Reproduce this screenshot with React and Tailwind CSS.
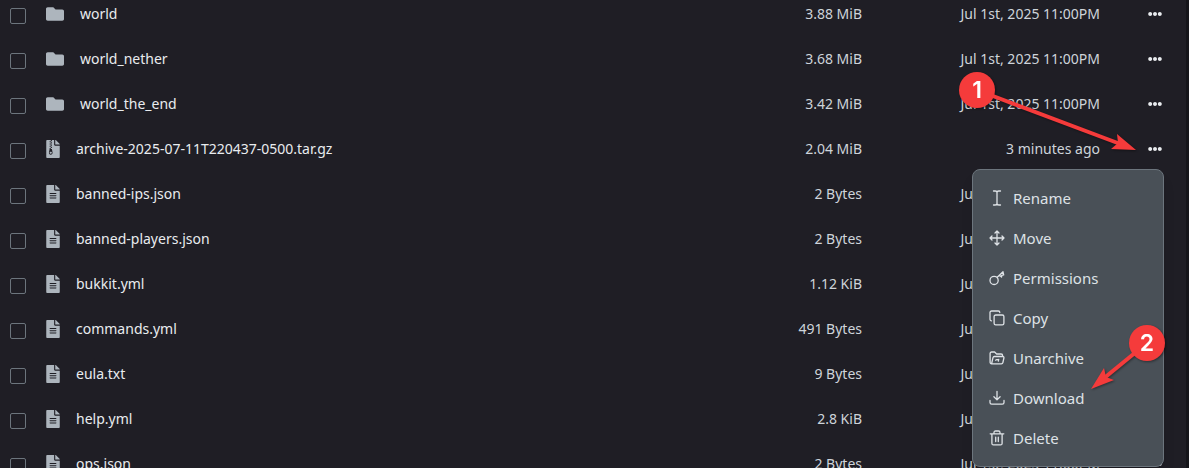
import React, { useState } from 'react';
import { FaFolder, FaFileAlt, FaFileArchive, FaEllipsisH } from 'react-icons/fa';

const files = [
  { name: 'world', type: 'folder', size: '3.88 MiB', modified: 'Jul 1st, 2025 11:00PM' },
  { name: 'world_nether', type: 'folder', size: '3.68 MiB', modified: 'Jul 1st, 2025 11:00PM' },
  { name: 'world_the_end', type: 'folder', size: '3.42 MiB', modified: 'Jul 1st, 2025 11:00PM' },
  { name: 'archive-2025-07-11T220437-0500.tar.gz', type: 'archive', size: '2.04 MiB', modified: '3 minutes ago' },
  { name: 'banned-ips.json', type: 'file', size: '2 Bytes', modified: 'Jul 1st, 2025 11:00PM' },
  { name: 'banned-players.json', type: 'file', size: '2 Bytes', modified: 'Jul 1st, 2025 11:00PM' },
  { name: 'bukkit.yml', type: 'file', size: '1.12 KiB', modified: 'Jul 1st, 2025 11:00PM' },
  { name: 'commands.yml', type: 'file', size: '491 Bytes', modified: 'Jul 1st, 2025 11:00PM' },
  { name: 'eula.txt', type: 'file', size: '9 Bytes', modified: 'Jul 1st, 2025 11:00PM' },
  { name: 'help.yml', type: 'file', size: '2.8 KiB', modified: 'Jul 1st, 2025 11:00PM' },
  { name: 'ops.json', type: 'file', size: '2 Bytes', modified: 'Jul 1st, 2025 11:00PM' },
];

const actions = [
  { label: 'Rename', icon: <path d="M4.500 1h1.800C7.400 1 8 1.500 8 2.400v11.200c0 .9-.6 1.400-1.700 1.400H4.500M11.500 1H9.700C8.600 1 8 1.500 8 2.400M8 13.600c0 .9.6 1.400 1.700 1.400h1.800" /> },
  { label: 'Move', icon: <path d="M8 1v14M1 8h14M6 3l2-2 2 2M6 13l2 2 2-2M3 6L1 8l2 2M13 6l2 2-2 2" /> },
  { label: 'Permissions', icon: <path d="M9.200 10.400a4.100 4.100 0 1 1-8.200 0 4.100 4.100 0 0 1 8.200 0zM8 7.500l6-5.700.7 3-1.900.5-.3 1.800-2.100-1.800" /> },
  { label: 'Copy', icon: <path d="M6.700 5h6.600c.9 0 1.600.7 1.600 1.600v6.700c0 .9-.7 1.600-1.600 1.600H6.700c-.9 0-1.600-.7-1.600-1.600V6.600c0-.9.7-1.600 1.600-1.600zM2.500 10.800C1.600 10.800 1 10.200 1 9.300V2.600C1 1.700 1.700 1 2.600 1h6.700c.9 0 1.500.6 1.500 1.500" /> },
  { label: 'Unarchive', icon: <path d="M2.600 13.800c-1 0-1.500-.6-1.500-1.500V3.500C1.100 2.600 1.700 2 2.600 2h3l2 2h4.500c1 0 1.500.6 1.500 1.500v1M2.600 13.800l1.300-6c.2-.8.7-1.300 1.500-1.300h8.300c.9 0 1.400.7 1.200 1.500l-1 4.500c-.2.8-.7 1.300-1.500 1.300zM6.700 10.200c.5-.7 1.300-.9 3-.9M9.700 9.300l-.4 1.700" /> },
  { label: 'Download', icon: <path d="M8 1.300v8.400M4.900 6.800L8 9.900l3.100-3.100M1 10.500v2c0 1 .7 1.700 1.700 1.700h10.600c1 0 1.700-.7 1.700-1.700v-2" /> },
  { label: 'Delete', icon: <path d="M1.200 3.800h13.600M5 3.800V2.500C5 1.600 5.600 1 6.500 1h3c.9 0 1.500.6 1.500 1.500v1.300M2.900 3.800v9.600c0 .9.6 1.500 1.500 1.500h7.200c.9 0 1.500-.6 1.500-1.500V3.800M6.700 7.200v4.300M9.300 7.200v4.300" /> },
];

const FileIcon = ({ type }) => {
  if (type === 'folder') return <FaFolder className="w-[18px] h-[18px] shrink-0 text-[#adb5bd]" />;
  if (type === 'archive') return <FaFileArchive className="w-[14px] h-[18px] shrink-0 text-[#adb5bd]" />;
  return <FaFileAlt className="w-[14px] h-[18px] shrink-0 text-[#adb5bd]" />;
};

const ActionMenu = () => (
  <div className="absolute right-[22px] top-full z-10 w-48 p-2 rounded-lg border border-[#6c757d] bg-[#495057] shadow-lg">
    {actions.map(action => (
      <button
        key={action.label}
        type="button"
        className="flex h-10 w-full items-center gap-2 px-2 text-left text-[15px] text-[#dee2e6] rounded hover:bg-[#5c636a]"
      >
        <svg
          className="w-4 h-4 shrink-0"
          viewBox="0 0 16 16"
          fill="none"
          stroke="currentColor"
          strokeWidth="1.3"
          strokeLinecap="round"
          strokeLinejoin="round"
          aria-hidden="true"
        >
          {action.icon}
        </svg>
        {action.label}
      </button>
    ))}
  </div>
);

const FileRow = ({ file, isOpen, onToggle }) => (
  <tr className="h-[45px]">
    <td className="p-0 pl-[10px] pt-1">
      <input
        type="checkbox"
        aria-label={`Select ${file.name}`}
        className="block w-4 h-4 appearance-none rounded-xs border border-[#6c757d] checked:bg-[#adb5bd]"
      />
    </td>
    <td className="p-0">
      <a href="#" className="flex items-center gap-4 text-[#e9ecef]">
        <FileIcon type={file.type} />
        {file.name}
      </a>
    </td>
    <td className="p-0 text-right">{file.size}</td>
    <td className="p-0 text-right">{file.modified}</td>
    <td className="p-0">
      <div className="relative flex h-10 items-center justify-end">
        <button type="button" aria-label={`Actions for ${file.name}`} onClick={onToggle} className="px-6 text-[#e9ecef]">
          <FaEllipsisH className="w-[14px] h-[14px]" />
        </button>
        {isOpen && <ActionMenu />}
      </div>
    </td>
  </tr>
);

// numbered steps drawn over the file list
const Steps = () => (
  <svg
    className="absolute right-0 top-0 z-20 w-60 h-[468px] pointer-events-none drop-shadow-[1px_1px_1px_rgba(0,0,0,0.4)]"
    viewBox="0 0 240 468"
    fill="#f53b3b"
  >
    <path d="M28 90L170 143.500" stroke="#f53b3b" strokeWidth="4" />
    <path d="M187 150L162 149L169 143L168 134z" />
    <path d="M198 343L154 379" stroke="#f53b3b" strokeWidth="4" />
    <path d="M142 389L155 368L157 377L165 380z" />
    <circle cx="28" cy="90" r="18" />
    <circle cx="198" cy="343" r="18" />
    <g fill="#fff" textAnchor="middle" className="font-['Inter',sans-serif] text-[23px] font-semibold">
      <text x="28" y="98">1</text>
      <text x="198" y="351">2</text>
    </g>
  </svg>
);

const App = () => {
  const [openFile, setOpenFile] = useState('archive-2025-07-11T220437-0500.tar.gz');

  return (
    <div className="relative h-screen overflow-hidden bg-[#15151a] pr-[3px] font-['Noto_Sans',sans-serif] text-[14px] leading-5 text-[#ced4da]">
      <div className="-mt-[9px] bg-[#1f1e25]">
        <table className="w-full table-fixed border-collapse">
          <colgroup>
            <col className="w-[46px]" />
            <col />
            <col className="w-[200px]" />
            <col className="w-[238px]" />
            <col className="w-[86px]" />
          </colgroup>
          <tbody>
            {files.map(file => (
              <FileRow
                key={file.name}
                file={file}
                isOpen={openFile === file.name}
                onToggle={() => setOpenFile(openFile === file.name ? null : file.name)}
              />
            ))}
          </tbody>
        </table>
      </div>
      <Steps />
    </div>
  );
};

export default App;
